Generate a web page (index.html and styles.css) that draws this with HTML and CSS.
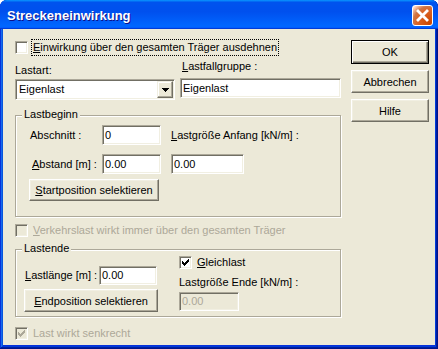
FILE: index.html
```html
<!DOCTYPE html>
<html lang="de">
<head>
  <meta charset="UTF-8">
  <title>Streckeneinwirkung</title>
  <link rel="stylesheet" href="styles.css">
</head>
<body>
  <div class="window">
    <!-- Titelleiste -->
    <div class="titlebar">
      <span class="title">Streckeneinwirkung</span>
      <span class="close">
        <svg width="19" height="19" viewBox="0 0 19 19"><path d="M5 5 L14 14 M14 5 L5 14" stroke="#fff" stroke-width="2.8" stroke-linecap="square"/></svg>
      </span>
    </div>

    <div class="client">
      <div class="main">
        <div class="check-row">
          <span class="box"></span>
          <span class="check-label focus"><u>E</u>inwirkung über den gesamten Träger ausdehnen</span>
        </div>

        <div class="fields">
          <div class="field field-left">
            <span class="lbl">Lastart:</span>
            <div class="combo">
              <span class="combo-value">Eigenlast</span>
              <span class="drop">
                <svg width="7" height="4" viewBox="0 0 7 4" shape-rendering="crispEdges"><path d="M0 0h7v1H0z M1 1h5v1H1z M2 2h3v1H2z M3 3h1v1H3z" fill="#000"/></svg>
              </span>
            </div>
          </div>
          <div class="field field-right">
            <span class="lbl"><u>L</u>astfallgruppe :</span>
            <div class="edit edit-group">Eigenlast</div>
          </div>
        </div>

        <!-- Lastbeginn -->
        <div class="group group-begin">
          <span class="legend">Lastbeginn</span>
          <div class="begin-grid">
            <span class="lbl">Abschnitt :</span>
            <div class="edit">0</div>
            <span class="lbl"><u>L</u>astgröße Anfang [kN/m] :</span>
            <span class="lbl indent"><u>A</u>bstand [m] :</span>
            <div class="edit">0.00</div>
            <div class="edit edit-start">0.00</div>
          </div>
          <button class="btn btn-start"><u>S</u>tartposition selektieren</button>
        </div>

        <div class="check-row row-traffic disabled">
          <span class="box"></span>
          <span class="check-label"><u>V</u>erkehrslast wirkt immer über den gesamten Träger</span>
        </div>

        <!-- Lastende -->
        <div class="group group-end">
          <span class="legend">Lastende</span>
          <div class="end-left">
            <div class="len-row">
              <span class="lbl len-lbl"><u>L</u>astlänge [m] :</span>
              <div class="edit edit-len">0.00</div>
            </div>
            <button class="btn btn-end"><u>E</u>ndposition selektieren</button>
          </div>
          <div class="end-right">
            <div class="check-row">
              <span class="box"><svg class="tick" width="11" height="11" viewBox="0 0 11 11" shape-rendering="crispEdges"><path d="M2 4h1v3H2z M3 5h1v3H3z M4 6h1v3H4z M5 5h1v3H5z M6 4h1v3H6z M7 3h1v3H7z M8 2h1v3H8z" fill="#000"/></svg></span>
              <span class="check-label"><u>G</u>leichlast</span>
            </div>
            <span class="lbl end-lbl">Lastgröße Ende [kN/m] :</span>
            <div class="edit edit-endval disabled">0.00</div>
          </div>
        </div>

        <div class="check-row row-vertical disabled">
          <span class="box"><svg class="tick" width="11" height="11" viewBox="0 0 11 11" shape-rendering="crispEdges"><path d="M2 4h1v3H2z M3 5h1v3H3z M4 6h1v3H4z M5 5h1v3H5z M6 4h1v3H6z M7 3h1v3H7z M8 2h1v3H8z" fill="#ACA899"/></svg></span>
          <span class="check-label">Last wirkt senkrecht</span>
        </div>
      </div>

      <div class="buttons">
        <button class="btn btn-default">OK</button>
        <button class="btn">Abbrechen</button>
        <button class="btn">Hilfe</button>
      </div>
    </div>
  </div>
</body>
</html>
```

FILE: styles.css
```css
body {
  margin: 0;
  font-family: "Liberation Sans", Arial, sans-serif;
  font-size: 11px;
  color: #000;
  background: #fff;
}

.window {
  width: 438px;
  height: 349px;
  box-sizing: border-box;
  display: flex;
  flex-direction: column;
  background: #0831d9;
  border-radius: 7px 7px 0 0;
  overflow: hidden;
  box-shadow: inset -1px -1px #00138c, inset 1px 1px #0831d9, inset -2px -2px #001ea0, inset 2px 2px #166aee, inset -3px -3px #003bda, inset 3px 3px #0855dd;
}

/* Titelleiste */
.titlebar {
  height: 29px;
  flex: none;
  display: flex;
  align-items: flex-start;
  justify-content: space-between;
  padding: 0 5px 0 7px;
  box-sizing: border-box;
  background: linear-gradient(180deg, #0997ff, #0053ee 8%, #0050ee 40%, #06f 88%, #06f 93%, #005bff 95%, #003dd7 96%, #003dd7);
}

.title {
  margin-top: 8px;
  color: #fff;
  font-weight: bold;
  font-size: 13px;
  line-height: 16px;
  text-shadow: 1px 1px #0f1089;
}

.close {
  margin-top: 5px;
  width: 21px;
  height: 21px;
  box-sizing: border-box;
  border: 1px solid #fff;
  border-radius: 3px;
  display: flex;
  align-items: center;
  justify-content: center;
  background: radial-gradient(circle at 90% 90%, #cc4600 0%, #dc6527 55%, #cd7546 70%, #ffccb2 90%, #fff 100%);
}

/* Dialogflaeche */
.client {
  flex: 1;
  margin: 0 3px 4px;
  background: #ece9d8;
  display: flex;
  padding: 11px 0 0 12px;
}

.main {
  width: 327px;
  display: flex;
  flex-direction: column;
}

.buttons {
  width: 78px;
  margin-left: 9px;
  display: flex;
  flex-direction: column;
  gap: 6px;
}

.lbl {
  line-height: 13px;
  white-space: nowrap;
}

u {
  text-decoration: underline;
}

/* Kontrollkaestchen */
.check-row {
  display: flex;
  align-items: center;
  height: 15px;
}

.box {
  width: 13px;
  height: 13px;
  flex: none;
  box-sizing: border-box;
  background: #fff;
  border: 1px solid;
  border-color: #aca899 #fff #fff #aca899;
  box-shadow: inset 1px 1px #716f64, inset -1px -1px #f1efe2;
  display: flex;
}

.check-label {
  margin-left: 5px;
  line-height: 13px;
  white-space: nowrap;
}

.check-label.focus {
  margin-left: 4px;
  padding: 1px 1px;
  outline: 1px dotted #000;
}

.disabled .box {
  background: #ece9d8;
}

.disabled .check-label {
  color: #aca899;
}

/* Eingabefelder */
.edit {
  height: 20px;
  box-sizing: border-box;
  background: #fff;
  border: 1px solid;
  border-color: #aca899 #fff #fff #aca899;
  box-shadow: inset 1px 1px #716f64, inset -1px -1px #f1efe2;
  display: flex;
  align-items: center;
  padding-left: 2px;
  line-height: 13px;
  white-space: nowrap;
}

.edit.disabled {
  background: #ece9d8;
  color: #aca899;
}

.fields {
  display: flex;
  gap: 5px;
}

.field {
  display: flex;
  flex-direction: column;
}

.field-left {
  width: 160px;
  padding-top: 9px;
}

.field-left .lbl {
  margin-bottom: 2px;
}

.field-right {
  width: 161px;
  padding-top: 5px;
}

.field-right .lbl {
  margin-bottom: 5px;
  padding-left: 2px;
}

.combo {
  height: 21px;
  box-sizing: border-box;
  background: #fff;
  border: 1px solid;
  border-color: #aca899 #fff #fff #aca899;
  box-shadow: inset 1px 1px #716f64, inset -1px -1px #f1efe2;
  display: flex;
  align-items: center;
  padding: 1px;
}

.combo-value {
  flex: 1;
  padding-left: 2px;
  line-height: 13px;
}

.drop {
  width: 16px;
  height: 17px;
  box-sizing: border-box;
  background: #ece9d8;
  border: 1px solid;
  border-color: #f1efe2 #716f64 #716f64 #f1efe2;
  box-shadow: inset -1px -1px #aca899, inset 1px 1px #fff;
  display: flex;
  align-items: center;
  justify-content: center;
}

/* Schaltflaechen */
.btn {
  font: inherit;
  color: #000;
  height: 23px;
  padding: 0;
  box-sizing: border-box;
  background: #ece9d8;
  border: 1px solid;
  border-color: #fff #716f64 #716f64 #fff;
  box-shadow: inset -1px -1px #aca899, inset 1px 1px #f1efe2;
  white-space: nowrap;
}

.btn-default {
  height: 24px;
  border-color: #000;
  box-shadow: inset 1px 1px #fff, inset -1px -1px #716f64, inset -2px -2px #aca899;
}

/* Gruppen */
.group {
  position: relative;
  width: 326px;
  box-sizing: border-box;
  border: 1px solid #aca899;
  box-shadow: inset 1px 1px #fff, 1px 1px #fff;
}

.legend {
  position: absolute;
  top: -8px;
  left: 6px;
  padding: 0 2px;
  background: #ece9d8;
  line-height: 13px;
}

.group-begin {
  margin-top: 15px;
  padding: 9px 0 15px 14px;
}

.begin-grid {
  display: grid;
  grid-template-columns: 62px 59px 73px;
  grid-template-rows: 20px 20px;
  column-gap: 10px;
  row-gap: 9px;
  align-items: center;
}

.begin-grid .edit {
  height: 100%;
}

.indent {
  padding-left: 2px;
}

.btn-start {
  margin: 5px 0 0 -1px;
  width: 130px;
  height: 22px;
  display: block;
}

.row-traffic {
  margin-top: 6px;
}

.group-end {
  margin-top: 11px;
  padding: 5px 0 4px 8px;
  display: flex;
}

.end-left {
  width: 134px;
  margin-top: 11px;
  display: flex;
  flex-direction: column;
}

.len-row {
  display: flex;
  align-items: center;
}

.len-lbl {
  width: 75px;
  padding-left: 1px;
  box-sizing: border-box;
}

.edit-len {
  width: 58px;
  height: 19px;
}

.btn-end {
  margin-top: 4px;
  width: 134px;
}

.end-right {
  margin-left: 21px;
  display: flex;
  flex-direction: column;
  align-items: flex-start;
}

.end-lbl {
  margin-top: 6px;
}

.edit-endval {
  margin-top: 3px;
  width: 60px;
  height: 19px;
}

.row-vertical {
  margin-top: 9px;
}
```
